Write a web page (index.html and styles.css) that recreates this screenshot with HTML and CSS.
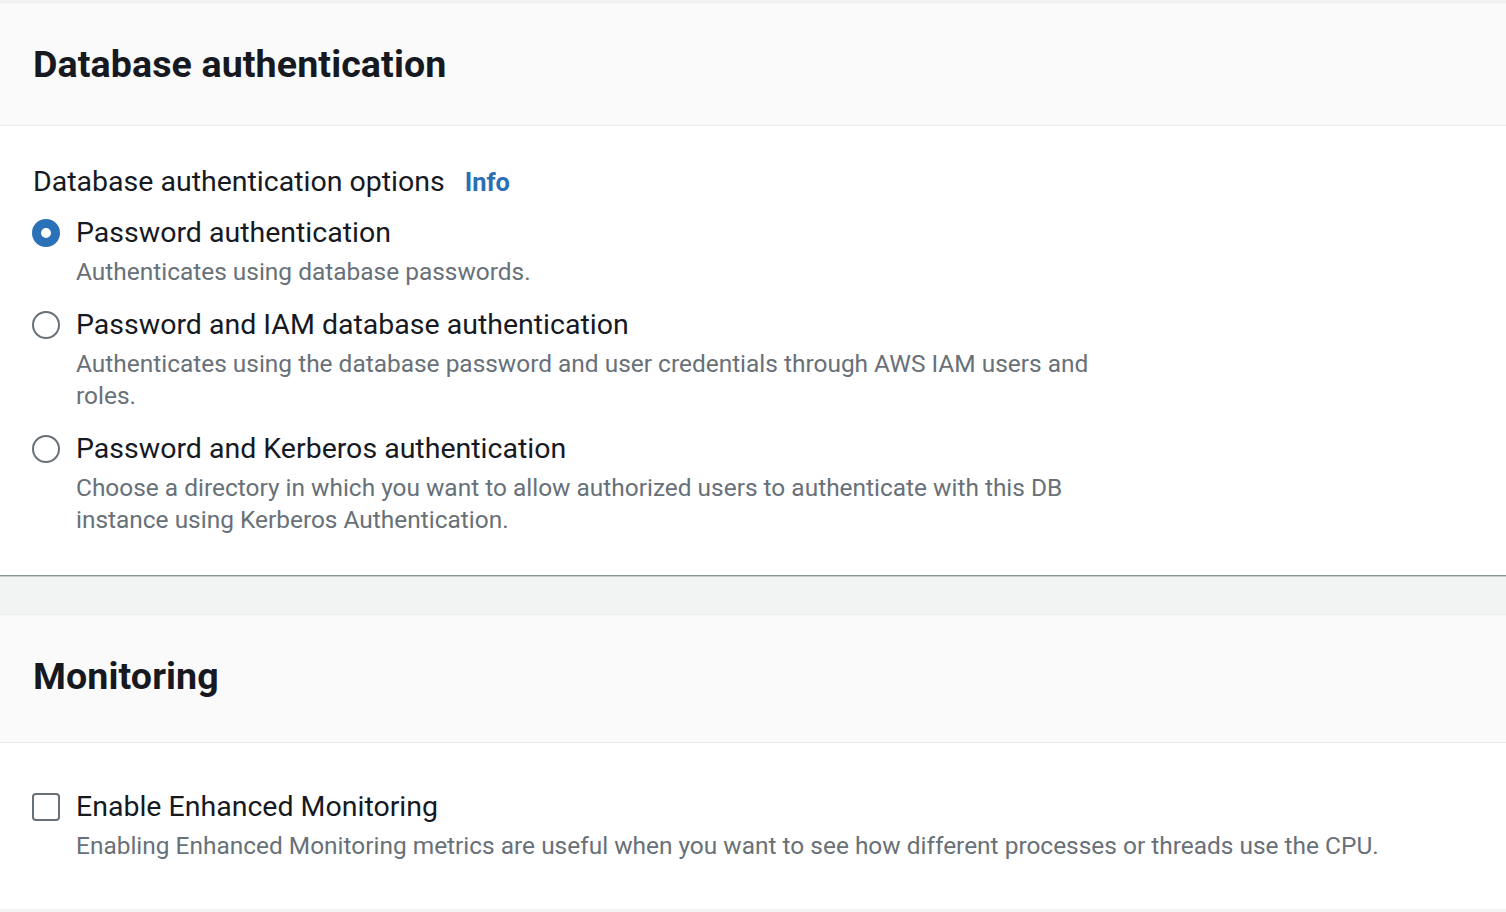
FILE: index.html
```html
<!DOCTYPE html>
<html lang="en">
<head>
<meta charset="utf-8">
<title>Database authentication</title>
<link rel="stylesheet" href="styles.css">
</head>
<body>
<main class="page">
  <section class="card card-first">
    <header class="card-header card-header-short">
      <h2 class="card-title">Database authentication</h2>
    </header>
    <div class="card-body">
      <div class="field-label">
        <span>Database authentication options</span>
        <a class="info-link" href="#">Info</a>
      </div>
      <div class="radio-group">
        <label class="choice">
          <span class="radio radio-checked"></span>
          <span class="choice-text">
            <span class="choice-label">Password authentication</span>
            <span class="choice-desc">Authenticates using database passwords.</span>
          </span>
        </label>
        <label class="choice">
          <span class="radio"></span>
          <span class="choice-text">
            <span class="choice-label">Password and IAM database authentication</span>
            <span class="choice-desc">Authenticates using the database password and user credentials through AWS IAM users and roles.</span>
          </span>
        </label>
        <label class="choice">
          <span class="radio"></span>
          <span class="choice-text">
            <span class="choice-label">Password and Kerberos authentication</span>
            <span class="choice-desc">Choose a directory in which you want to allow authorized users to authenticate with this DB instance using Kerberos Authentication.</span>
          </span>
        </label>
      </div>
    </div>
  </section>

  <section class="card">
    <header class="card-header">
      <h2 class="card-title">Monitoring</h2>
    </header>
    <div class="card-body card-body-even">
      <label class="choice">
        <span class="checkbox"></span>
        <span class="choice-text">
          <span class="choice-label">Enable Enhanced Monitoring</span>
          <span class="choice-desc choice-desc-wide">Enabling Enhanced Monitoring metrics are useful when you want to see how different processes or threads use the CPU.</span>
        </span>
      </label>
    </div>
  </section>
</main>
</body>
</html>
```

FILE: styles.css
```css
* { box-sizing: border-box; }

html, body {
  margin: 0;
  padding: 0;
  background: #f2f3f3;
  font-family: Roboto, "Liberation Sans", Arial, sans-serif;
  color: #16191f;
}

.page {
  display: flex;
  flex-direction: column;
  gap: 39px;
  padding-top: 2px;
}

.card {
  background: #ffffff;
  border-top: 1px solid #eaeded;
  box-shadow: 0 1px 0 #879596, 0 2px 0 #c9cfd0;
}

.card-header {
  background: #fafafa;
  border-bottom: 1px solid #eaeded;
  padding: 41px 33px 46px 33px;
}

.card-header-short {
  padding-bottom: 41px;
}

.card-title {
  margin: 0;
  font-size: 37.6px;
  line-height: 40px;
  font-weight: 700;
  letter-spacing: 0.1px;
}

.card-body {
  padding: 40px 33px 39px 32px;
}

.card-body-even {
  padding: 48px 33px 47px 32px;
}

.field-label {
  display: flex;
  align-items: baseline;
  gap: 20px;
  font-size: 28.5px;
  line-height: 32px;
  padding-left: 1px;
  margin-bottom: 19px;
}

.info-link {
  color: #2a6fb5;
  font-weight: 700;
  font-size: 25.5px;
  text-decoration: none;
}

.radio-group {
  display: flex;
  flex-direction: column;
  gap: 21px;
}

.choice {
  display: flex;
  align-items: flex-start;
  gap: 16px;
}

.radio,
.checkbox {
  flex: 0 0 auto;
  width: 28px;
  height: 28px;
  margin-top: 2px;
  border: 2px solid #687078;
  background: #fff;
}

.radio {
  border-radius: 50%;
}

.radio-checked {
  border: 9px solid #2b71b8;
}

.checkbox {
  border-radius: 4px;
}

.choice-text {
  display: flex;
  flex-direction: column;
  gap: 7px;
}

.choice-label {
  font-size: 28.5px;
  line-height: 32px;
}

.choice-desc {
  font-size: 24.45px;
  line-height: 32px;
  color: #687078;
  max-width: 1045px;
}

.choice-desc-wide {
  max-width: none;
}
```
